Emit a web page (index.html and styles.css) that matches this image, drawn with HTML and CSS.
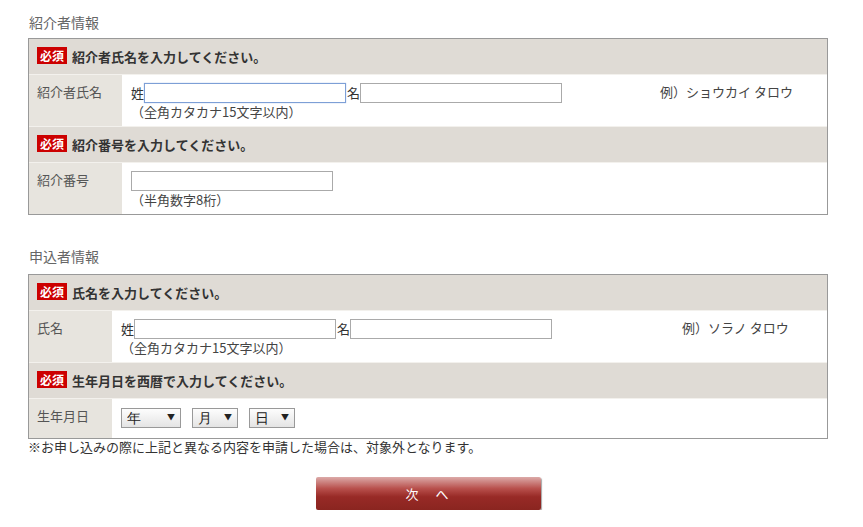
FILE: index.html
```html
<!DOCTYPE html>
<html lang="ja">
<head>
    <meta charset="UTF-8">
    <meta name="viewport" content="width=device-width, initial-scale=1.0">
    <title>お申し込みフォーム</title>
    <link rel="stylesheet" href="styles.css">
</head>
<body>
    <main class="wrap">
        <h2 class="sec-title">紹介者情報</h2>
        <table class="form-table intro">
            <tr class="req-row">
                <td colspan="3"><span class="badge">必須</span>紹介者氏名を入力してください。</td>
            </tr>
            <tr>
                <th>紹介者氏名</th>
                <td class="field">
                    <div class="name-line">
                        姓<input type="text" class="txt active">名<input type="text" class="txt">
                    </div>
                    <p class="hint">（全角カタカナ15文字以内）</p>
                </td>
                <td class="example">例）ショウカイ タロウ</td>
            </tr>
            <tr class="req-row">
                <td colspan="3"><span class="badge">必須</span>紹介番号を入力してください。</td>
            </tr>
            <tr>
                <th>紹介番号</th>
                <td class="field" colspan="2">
                    <input type="text" class="txt">
                    <p class="hint">（半角数字8桁）</p>
                </td>
            </tr>
        </table>

        <h2 class="sec-title second">申込者情報</h2>
        <table class="form-table applicant">
            <tr class="req-row">
                <td colspan="3"><span class="badge">必須</span>氏名を入力してください。</td>
            </tr>
            <tr>
                <th>氏名</th>
                <td class="field">
                    <div class="name-line">
                        姓<input type="text" class="txt">名<input type="text" class="txt">
                    </div>
                    <p class="hint">（全角カタカナ15文字以内）</p>
                </td>
                <td class="example">例）ソラノ タロウ</td>
            </tr>
            <tr class="req-row">
                <td colspan="3"><span class="badge">必須</span>生年月日を西暦で入力してください。</td>
            </tr>
            <tr>
                <th>生年月日</th>
                <td class="field" colspan="2">
                    <div class="date-line">
                        <span class="sel sel-year"><select><option>年</option></select></span>
                        <span class="sel sel-month"><select><option>月</option></select></span>
                        <span class="sel sel-day"><select><option>日</option></select></span>
                    </div>
                </td>
            </tr>
        </table>
        <p class="note">※お申し込みの際に上記と異なる内容を申請した場合は、対象外となります。</p>

        <div class="actions">
            <button type="button" class="next-btn">次　へ</button>
        </div>
    </main>
</body>
</html>
```

FILE: styles.css
```css
body {
    margin: 0;
    padding: 0;
    background: #fff;
    color: #333;
    font-family: "Noto Sans CJK JP", "Noto Sans", sans-serif;
    font-size: 13px;
}

.wrap {
    width: 800px;
    margin-left: 28px;
    padding-top: 12px;
}

.sec-title {
    font-size: 14px;
    font-weight: normal;
    color: #666;
    line-height: 20px;
    margin: 0 0 6px 1px;
}

.sec-title.second {
    margin-top: 31px;
    margin-bottom: 8px;
}

.form-table {
    width: 800px;
    border: 1px solid #999;
    border-collapse: separate;
    border-spacing: 0;
}

.form-table td,
.form-table th {
    padding: 0;
    line-height: 18px;
    vertical-align: top;
    border-top: 1px solid #f3f1ed;
}

.form-table tr:first-child td {
    border-top: none;
}

.req-row td {
    background: #dfdbd5;
    height: 35px;
    padding: 0 8px;
    vertical-align: middle;
    font-weight: bold;
    color: #333;
}

.badge {
    display: inline-block;
    background: #c00;
    color: #fff;
    font-size: 12px;
    line-height: 17px;
    padding: 0 3px;
    margin-right: 5px;
    vertical-align: 1px;
}

.form-table th {
    background: #e7e4de;
    text-align: left;
    font-weight: normal;
    color: #555;
    padding: 8px 8px;
}

.intro th {
    width: 77px;
}

.applicant th {
    width: 67px;
}

.field {
    padding: 8px 8px 6px 9px !important;
    color: #333;
}

.intro .field {
    width: 521px;
}

.applicant .field {
    width: 553px;
}

.example {
    padding-top: 8px !important;
    color: #444;
}

.name-line {
    display: flex;
    align-items: center;
    height: 20px;
}

.txt {
    width: 202px;
    height: 20px;
    box-sizing: border-box;
    border: 1px solid #aaa;
    margin: 0 1px 0 0;
    padding: 0 2px;
    font-size: 13px;
}

.txt.active {
    border-color: #7d9fd6;
    box-shadow: 0 0 1px #9bb8e6;
}

.hint {
    margin: 0;
    line-height: 17px;
    color: #444;
}

.date-line {
    display: flex;
    gap: 11px;
    height: 24px;
    padding-top: 1px;
}

.sel {
    position: relative;
    display: inline-block;
    height: 20px;
}

.sel select {
    appearance: none;
    -webkit-appearance: none;
    height: 20px;
    border: 1px solid #999;
    border-radius: 0;
    background: linear-gradient(#fdfdfd, #e4e4e4);
    font-family: "DejaVu Sans", sans-serif;
    font-size: 14px;
    color: #222;
    padding: 0 0 0 5px;
    margin: 0;
}

.sel::after {
    content: "▼";
    position: absolute;
    right: 6px;
    top: 4px;
    font-size: 8px;
    line-height: 10px;
    color: #222;
    pointer-events: none;
}

.sel-year select {
    width: 60px;
}

.sel-month select {
    width: 46px;
}

.sel-day select {
    width: 46px;
}

.note {
    margin: 0;
    line-height: 16px;
    color: #333;
}

.actions {
    display: flex;
    justify-content: center;
    margin-top: 22px;
}

.next-btn {
    width: 225px;
    height: 33px;
    border: none;
    border-radius: 2px;
    background: linear-gradient(#dcaaa8 0%, #b8504c 35%, #982a26 60%, #8a2520 100%);
    box-shadow: 1px 1px 1px rgba(0, 0, 0, 0.35);
    color: #fff;
    font-family: "Noto Sans CJK JP", sans-serif;
    font-size: 13px;
    letter-spacing: 2px;
    cursor: pointer;
}
```
